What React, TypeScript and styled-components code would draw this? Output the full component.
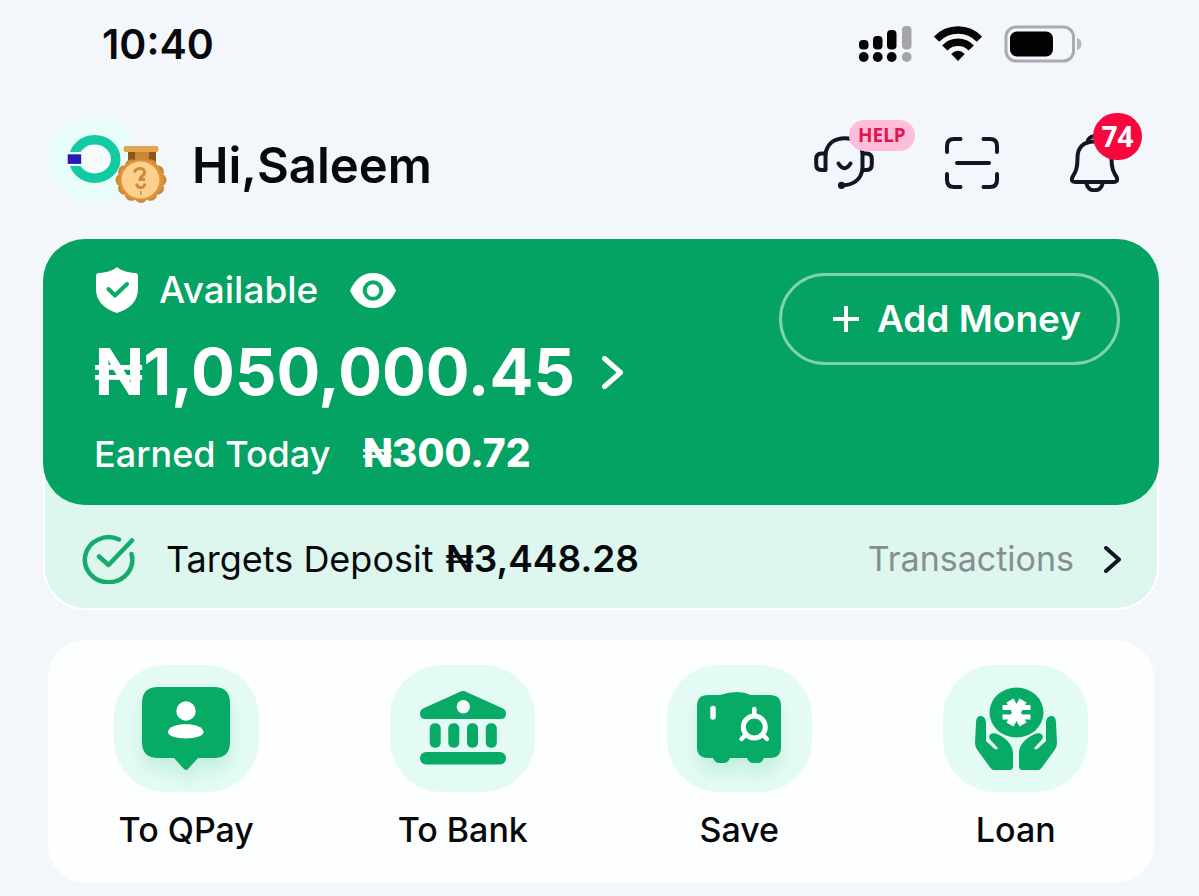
import React from "react";
import styled, { createGlobalStyle } from "styled-components";

const GlobalStyle = createGlobalStyle`
  *, *::before, *::after { box-sizing: border-box; }
  body {
    margin: 0;
    background: #f3f7fc;
    color: #08090c;
    font-family: Inter, "Noto Sans", sans-serif;
  }
  svg { display: block; flex: none; }
  h1, p { margin: 0; }
`;

const Page = styled.main`
  display: flex;
  flex-direction: column;
  padding: 0 40px 13px 43px;
`;

const StatusBar = styled.div`
  display: flex;
  align-items: center;
  justify-content: space-between;
  height: 88px;
  padding: 0 77px 0 59px;
`;

const Clock = styled.time`
  font-size: 41px;
  line-height: 48px;
  font-weight: 600;
`;

const StatusIcons = styled.div`
  display: flex;
  align-items: center;
  gap: 22px;
`;

const Header = styled.header`
  display: flex;
  align-items: center;
  justify-content: space-between;
  margin-top: 24px;
  padding: 0 40px 0 5px;
`;

const Profile = styled.div`
  display: flex;
  align-items: center;
  gap: 22px;
`;

const Greeting = styled.h1`
  padding-top: 11px;
  font-size: 49px;
  line-height: 56px;
  font-weight: 600;
`;

const HeaderActions = styled.div`
  display: flex;
  align-items: center;
  gap: 71px;
  padding-top: 5px;
`;

const PlainButton = styled.button`
  display: flex;
  align-items: center;
  padding: 0;
  border: 0;
  background: none;
  color: inherit;
  font: inherit;
  cursor: pointer;
`;

const IconButton = styled(PlainButton)`
  position: relative;
`;

const HelpBadge = styled.span`
  position: absolute;
  top: -16px;
  left: 35px;
  padding: 0 9px;
  border-radius: 16px;
  background: #ffbddb;
  color: #e0164f;
  font-family: "Noto Sans", sans-serif;
  font-size: 19px;
  line-height: 31px;
  font-weight: 700;
`;

const CountBadge = styled.span`
  position: absolute;
  top: -21px;
  left: 23px;
  width: 49px;
  border-radius: 24px;
  background: #f8073f;
  color: #fff;
  font-family: "Noto Sans", sans-serif;
  font-size: 28px;
  line-height: 47px;
  font-weight: 700;
  text-align: center;
`;

const Wallet = styled.section`
  margin-top: 31px;
  border: 2px solid #fff;
  border-top: 0;
  border-radius: 42px;
  background: #ddf6ee;
`;

const Balance = styled.div`
  display: flex;
  align-items: flex-start;
  justify-content: space-between;
  height: 266px;
  margin: 0 -2px;
  padding: 28px 39px 0 51px;
  border-radius: 42px;
  background: #04a263;
  color: #fff;
`;

const Figures = styled.div`
  display: flex;
  flex-direction: column;
`;

const Available = styled.div`
  display: flex;
  align-items: center;
  gap: 21px;
  padding-left: 2px;
  font-size: 37px;
  line-height: 46px;
  font-weight: 500;

  button { margin-left: 11px; }
`;

const Amount = styled(PlainButton)`
  gap: 27px;
  margin-top: 17px;
  font-size: 65px;
  line-height: 84px;
  font-weight: 700;
`;

const Earned = styled.p`
  display: flex;
  align-items: baseline;
  gap: 32px;
  margin-top: 17px;
  font-size: 36px;
  line-height: 44px;
  font-weight: 500;

  strong {
    font-size: 39px;
    font-weight: 800;
  }
`;

const AddMoney = styled.button`
  display: flex;
  align-items: center;
  justify-content: center;
  gap: 18px;
  height: 92px;
  margin-top: 6px;
  padding: 0 36px 0 51px;
  border: 3px solid #7fd2ae;
  border-radius: 46px;
  background: none;
  color: #fff;
  font: 600 37px/44px Inter, "Noto Sans", sans-serif;
  cursor: pointer;
`;

const Targets = styled.div`
  display: flex;
  align-items: center;
  justify-content: space-between;
  height: 103px;
  padding: 5px 36px 0 37px;
  font-size: 36px;
  line-height: 44px;
`;

const Deposit = styled.div`
  display: flex;
  align-items: center;
  gap: 31px;

  p {
    display: flex;
    align-items: baseline;
    gap: 12px;
  }

  strong {
    font-size: 37px;
    font-weight: 600;
  }
`;

const Transactions = styled.a`
  display: flex;
  align-items: center;
  gap: 30px;
  color: #868e90;
  font-size: 34px;
  text-decoration: none;
`;

const Services = styled.nav`
  display: grid;
  grid-template-columns: repeat(4, 1fr);
  margin: 30px 5px 0;
  padding: 25px 0 32px;
  border-radius: 38px;
  background: #fdfefe;
`;

const Service = styled(PlainButton)`
  flex-direction: column;
  gap: 16px;
  font-size: 34px;
  line-height: 43px;
  font-weight: 500;
`;

const Tile = styled.span<{ $shade?: boolean }>`
  display: flex;
  align-items: center;
  justify-content: center;
  width: 145px;
  height: 127px;
  border-radius: 52px;
  background: #e3fbf4;

  svg { filter: ${(p) => (p.$shade ? "drop-shadow(0 12px 8px #04a26320)" : "none")}; }
`;

const GREEN = "#08ab66";

const SignalIcon = () => (
  <svg width="54" height="36" viewBox="0 0 54 36" aria-hidden="true">
    {[
      [1, 14],
      [15, 10],
      [29, 4],
      [44, 0],
    ].map(([x, y], i) => (
      <g key={x} fill={i === 3 ? "#a5a5a7" : "#050505"}>
        <rect x={x} y={y} width="9.5" height={23.5 - y} rx="4" />
        <circle cx={x + 4.7} cy="31" r="4.9" />
      </g>
    ))}
  </svg>
);

const WifiIcon = () => (
  <svg width="48" height="36" viewBox="0 0 48 36" aria-hidden="true">
    <g fill="none" stroke="#050505" strokeWidth="7.5">
      <path d="M2.5 13.2A29.5 29.5 0 0 1 45.5 13.2" />
      <path d="M10.8 22A18.3 18.3 0 0 1 37.2 22" />
    </g>
    <path d="M17.2 28Q24 21.5 30.8 28L24 35Z" fill="#050505" />
  </svg>
);

const BatteryIcon = () => (
  <svg width="78" height="38" viewBox="0 0 78 38" aria-hidden="true">
    <rect x="2" y="2" width="67.5" height="34" rx="10" fill="none" stroke="#a9abb0" strokeWidth="3" />
    <rect x="6" y="6.5" width="43" height="25" rx="7" fill="#030303" />
    <path d="M73 13Q77.5 14 77.5 19T73 25Z" fill="#b5b7ba" />
  </svg>
);

const SCALLOPS = Array.from({ length: 12 }, (_, i) => (i * Math.PI * 2) / 12);

const Avatar = () => (
  <svg width="122" height="96" viewBox="0 0 122 96" role="img" aria-label="Profile">
    <circle cx="45" cy="47" r="44" fill="#e8fdf8" />
    <ellipse cx="46.7" cy="47" rx="21" ry="19.2" fill="#f5fafb" stroke="#12cba4" strokeWidth="9.6" />
    <path d="M18 40H33V54H18Z" fill="#f2fdfb" />
    <rect x="19.7" y="42.3" width="13.5" height="9.6" fill="#251cb5" />
    <path d="M80 38H108V50H80Z" fill="#8a5518" />
    <path d="M87 38H101V50H87Z" fill="#c98632" />
    {SCALLOPS.map((a) => (
      <circle key={a} cx={93 + Math.cos(a) * 19} cy={68 + Math.sin(a) * 16.5} r="6.5" fill="#cd8833" />
    ))}
    <ellipse cx="93" cy="68" rx="22.5" ry="20.5" fill="#d9943d" />
    <rect x="75.7" y="34" width="34.6" height="6" rx="1.5" fill="#e2a44d" />
    <ellipse cx="92.5" cy="68" rx="19" ry="18.5" fill="#fdd18b" />
    <g fill="none" stroke="#c98a42" strokeWidth="3">
      <path d="M86.5 60.5C87 55 97 55 96.5 60.5C96.5 64 92 64 92 67.5H97" />
      <path d="M88.5 71.5C89.5 77 96 77 97 71.5" />
      <path d="M92.8 79V83" strokeWidth="1.5" />
    </g>
  </svg>
);

const HeadsetIcon = () => (
  <svg width="60" height="54" viewBox="0 0 60 54" fill="none" stroke="#111722" strokeWidth="4" strokeLinecap="round" strokeLinejoin="round" aria-hidden="true">
    <path d="M11.5 18C13 8 20 2.2 31 2.2C41 2.2 47 8 48.5 17" />
    <path d="M11.5 17.5V34H7.5Q2.2 34 2.2 28.5V23Q2.2 17.5 7.5 17.5Z" />
    <path d="M48.5 17.5V34H52.5Q57.8 34 57.8 28.5V23Q57.8 17.5 52.5 17.5Z" />
    <path d="M48.5 33C47 43 40 49 29 49.3" />
    <circle cx="27.5" cy="49.3" r="1.6" />
    <path d="M24.5 27.5Q30.5 37 36.5 27.5" />
  </svg>
);

const ScanIcon = () => (
  <svg width="54" height="52" viewBox="0 0 54 52" fill="none" stroke="#111722" strokeWidth="4" strokeLinecap="round" aria-hidden="true">
    <path d="M2 15V9Q2 2 9 2H15.5M38.5 2H45Q52 2 52 9V15M52 37V43Q52 50 45 50H38.5M15.5 50H9Q2 50 2 43V37" />
    <path d="M12 26H44" />
  </svg>
);

const BellIcon = () => (
  <svg width="49" height="58" viewBox="0 0 49 58" fill="none" stroke="#111722" strokeWidth="4" strokeLinecap="round" strokeLinejoin="round" aria-hidden="true">
    <path d="M17.5 8.5C18 0 31 0 31.5 8.5" />
    <path d="M24.5 7.5C13 7.5 7.5 14 7.5 24C7.5 35 5.5 38 2.5 43C1 46 2 48 5 48H44C47 48 48 46 46.5 43C43.5 38 41.5 35 41.5 24C41.5 14 36 7.5 24.5 7.5Z" />
    <path d="M16.5 49.5C17.5 58.5 31.5 58.5 32.5 49.5" />
  </svg>
);

const ShieldIcon = () => (
  <svg width="42" height="46" viewBox="0 0 42 46" aria-hidden="true">
    <path d="M21 0C24 3 31 5.5 39 6Q42 6.2 42 9V22C42 34 34 42 21 46C8 42 0 34 0 22V9Q0 6.2 3 6C11 5.5 18 3 21 0Z" fill="#fff" />
    <path d="M12.5 22L19 28.5L31 17" fill="none" stroke={GREEN} strokeWidth="4" strokeLinecap="round" strokeLinejoin="round" />
  </svg>
);

const EyeIcon = () => (
  <svg width="46" height="35" viewBox="0 0 46 35" aria-hidden="true">
    <path d="M0 17.5C5 6 13 0 23 0S41 6 46 17.5C41 29 33 35 23 35S5 29 0 17.5Z" fill="#fff" />
    <circle cx="23" cy="17.5" r="8.3" fill="none" stroke={GREEN} strokeWidth="4" />
  </svg>
);

const PlusIcon = () => (
  <svg width="26" height="26" viewBox="0 0 26 26" stroke="#fff" strokeWidth="4" aria-hidden="true">
    <path d="M0 13H26M13 0V26" />
  </svg>
);

const Chevron = ({ width, height, color, stroke }: { width: number; height: number; color: string; stroke: number }) => (
  <svg width={width} height={height} viewBox={`0 0 ${width} ${height}`} fill="none" stroke={color} strokeWidth={stroke} strokeLinejoin="round" strokeLinecap="round" aria-hidden="true">
    <path d={`M${stroke / 2} ${stroke / 2}L${width - stroke / 2} ${height / 2}L${stroke / 2} ${height - stroke / 2}`} />
  </svg>
);

const TargetIcon = () => (
  <svg width="53" height="50" viewBox="0 0 53 50" fill="none" stroke="#16aa6b" strokeWidth="4.5" strokeLinecap="round" strokeLinejoin="round" aria-hidden="true">
    <path d="M37 5.5A23.7 22.5 0 1 0 49.5 20" />
    <path d="M17 22.5L26.5 31L50 6.5" />
  </svg>
);

const QPayIcon = () => (
  <svg width="88" height="86" viewBox="0 0 88 86" aria-hidden="true">
    <path d="M16 1H72Q88 1 88 17V56Q88 72 72 72H56L46 83Q44 85 42 83L32 72H16Q0 72 0 56V17Q0 1 16 1Z" fill={GREEN} />
    <circle cx="44" cy="25" r="9.7" fill="#fff" />
    <path d="M26 46C26 35.5 61.5 35.5 61.5 46C61.5 54.5 26 54.5 26 46Z" fill="#fff" />
  </svg>
);

const BankIcon = () => (
  <svg width="86" height="76" viewBox="0 0 86 76" fill={GREEN} aria-hidden="true">
    <path d="M39 1.2Q43 -1 47 1.2L83 17.5Q86 19 86 22.5Q86 28 80.5 28H5.5Q0 28 0 22.5Q0 19 3 17.5Z" />
    <circle cx="43.3" cy="15.7" r="6.7" fill="#f4fffb" />
    {[9.7, 28.3, 47, 65.8].map((x) => (
      <rect key={x} x={x} y="32.3" width="11" height="24.5" rx="5" />
    ))}
    <rect y="61" width="86" height="12.5" rx="6" />
  </svg>
);

const SafeIcon = () => (
  <svg width="86" height="76" viewBox="0 0 86 76" aria-hidden="true">
    <path d="M12 4H24Q42 -2 55 4H74Q85 4 85 15V56Q85 67 74 67H68Q66 72 62 72H57Q53 72 51 67H34Q32 72 28 72H23Q19 72 17 67H12Q1 67 1 56V15Q1 4 12 4Z" fill={GREEN} />
    <g fill="none" stroke="#fff" strokeWidth="5">
      <path d="M17 17.5V26" strokeWidth="5.5" strokeLinecap="round" />
      <circle cx="58.3" cy="36" r="11" />
      <path d="M58.3 18V25M50 43.5L45.5 48M66.5 43.5L71 48" strokeWidth="4.5" strokeLinecap="round" />
    </g>
  </svg>
);

const HAND =
  "M6.7 29C10 29 12 32 12 36V54L20 61.5Q22.5 63.5 24 61L16 52.5C13.5 48 17 45.5 21.5 46.5C26 47.5 39 55 39 66V79Q39 83 35.5 83H20Q18 83 16.5 81L3 62.5Q1 59.5 1 56L2 35.5C2.3 31.5 3.5 29 6.7 29Z";

const LoanIcon = () => (
  <svg width="84" height="84" viewBox="0 0 84 84" fill={GREEN} aria-hidden="true">
    <ellipse cx="42.5" cy="25.5" rx="27" ry="25" />
    <g stroke="#fff">
      <path d="M36 13.500L49 37.500M49 13.500L36 37.500" strokeWidth="8" />
      <path d="M28.5 20.500H56.500M28.5 30H56.500" strokeWidth="5" />
    </g>
    <path d={HAND} />
    <path d={HAND} transform="translate(84 0) scale(-1 1)" />
  </svg>
);

const SERVICES = [
  { label: "To QPay", icon: <QPayIcon />, shade: true },
  { label: "To Bank", icon: <BankIcon />, shade: false },
  { label: "Save", icon: <SafeIcon />, shade: true },
  { label: "Loan", icon: <LoanIcon />, shade: false },
];

export default function App() {
  return (
    <Page>
      <GlobalStyle />
      <StatusBar>
        <Clock>10:40</Clock>
        <StatusIcons>
          <SignalIcon />
          <WifiIcon />
          <BatteryIcon />
        </StatusIcons>
      </StatusBar>
      <Header>
        <Profile>
          <Avatar />
          <Greeting>Hi,Saleem</Greeting>
        </Profile>
        <HeaderActions>
          <IconButton aria-label="Help">
            <HeadsetIcon />
            <HelpBadge>HELP</HelpBadge>
          </IconButton>
          <IconButton aria-label="Scan">
            <ScanIcon />
          </IconButton>
          <IconButton aria-label="Notifications">
            <BellIcon />
            <CountBadge>74</CountBadge>
          </IconButton>
        </HeaderActions>
      </Header>
      <Wallet>
        <Balance>
          <Figures>
            <Available>
              <ShieldIcon />
              Available
              <PlainButton aria-label="Hide balance">
                <EyeIcon />
              </PlainButton>
            </Available>
            <Amount>
              ₦1,050,000.45
              <Chevron width={21} height={33} color="#fff" stroke={5} />
            </Amount>
            <Earned>
              Earned Today <strong>₦300.72</strong>
            </Earned>
          </Figures>
          <AddMoney>
            <PlusIcon />
            Add Money
          </AddMoney>
        </Balance>
        <Targets>
          <Deposit>
            <TargetIcon />
            <p>
              Targets Deposit <strong>₦3,448.28</strong>
            </p>
          </Deposit>
          <Transactions href="#transactions">
            Transactions
            <Chevron width={17} height={27} color="#111722" stroke={4} />
          </Transactions>
        </Targets>
      </Wallet>
      <Services>
        {SERVICES.map((s) => (
          <Service key={s.label}>
            <Tile $shade={s.shade}>{s.icon}</Tile>
            {s.label}
          </Service>
        ))}
      </Services>
    </Page>
  );
}
